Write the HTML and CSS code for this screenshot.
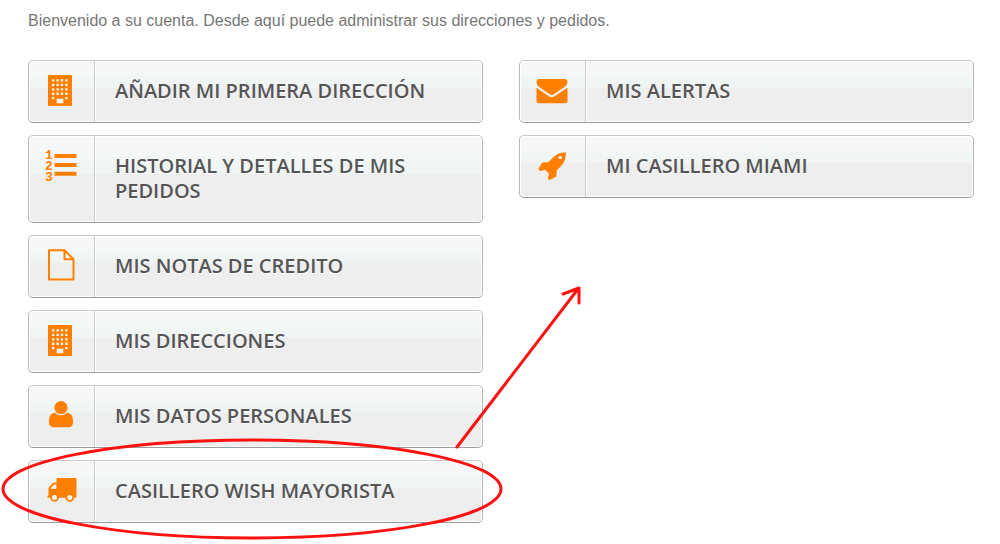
FILE: index.html
```html
<!DOCTYPE html>
<html lang="es">

<head>
    <meta charset="utf-8">
    <meta name="viewport" content="width=device-width, initial-scale=1.0">
    <title>Mi cuenta</title>
    <link rel="stylesheet" href="styles.css">
</head>

<body>
    <svg class="sprite" aria-hidden="true">
        <symbol id="building" viewBox="0 0 32 32">
            <rect x="3" y="1" width="24" height="31" rx="1" />
            <path class="hueco" d="M7 5.300h2.300v2.300h-2.300zM11.500 5.300h2.300v2.300h-2.300zM15.800 5.300h2.300v2.300h-2.300zM20.200 5.300h2.300v2.300h-2.300zM7 9.700h2.300v2.300h-2.300zM11.500 9.700h2.300v2.300h-2.300zM15.800 9.700h2.300v2.300h-2.300zM20.200 9.700h2.300v2.300h-2.300zM7 14.200h2.300v2.300h-2.300zM11.500 14.200h2.300v2.300h-2.300zM15.800 14.200h2.300v2.300h-2.300zM20.200 14.200h2.300v2.300h-2.300zM7 18.600h2.300v2.300h-2.300zM11.500 18.600h2.300v2.300h-2.300zM15.800 18.600h2.300v2.300h-2.300zM20.200 18.600h2.300v2.300h-2.300zM7 23h2.300v2.300h-2.300zM20.200 23h2.300v2.300h-2.300zM11.700 24.700h6.600v4.500h-6.600z" />
        </symbol>
    </svg>

    <main class="cuenta">
        <p class="intro">Bienvenido a su cuenta. Desde aquí puede administrar sus direcciones y pedidos.</p>

        <div class="columnas">
            <ul class="lista">
                <li>
                    <a class="enlace" href="#">
                        <span class="icono"><svg viewBox="0 0 32 32"><use href="#building" /></svg></span>
                        <span class="texto">Añadir mi primera dirección</span>
                    </a>
                </li>
                <li>
                    <a class="enlace" href="#">
                        <span class="icono">
                            <svg viewBox="0 0 32 32">
                                <text class="cifra" x="0" y="10">1</text>
                                <text class="cifra" x="0" y="21">2</text>
                                <text class="cifra" x="0" y="32">3</text>
                                <path d="M9.500 5h22v4h-22zM9.500 14h22v4h-22zM9.500 22.700h22v4h-22z" />
                            </svg>
                        </span>
                        <span class="texto">Historial y detalles de mis pedidos</span>
                    </a>
                </li>
                <li>
                    <a class="enlace" href="#">
                        <span class="icono">
                            <svg viewBox="0 0 32 32">
                                <path class="linea" d="M4 1.200h15.500l9 9v20.300h-24.500zM19.500 1.200v9h9" />
                            </svg>
                        </span>
                        <span class="texto">Mis notas de credito</span>
                    </a>
                </li>
                <li>
                    <a class="enlace" href="#">
                        <span class="icono"><svg viewBox="0 0 32 32"><use href="#building" /></svg></span>
                        <span class="texto">Mis direcciones</span>
                    </a>
                </li>
                <li>
                    <a class="enlace" href="#">
                        <span class="icono">
                            <svg viewBox="0 0 32 32">
                                <circle cx="16" cy="8.700" r="6.600" />
                                <path d="M9.800 13.800c3.800 3.400 8.600 3.400 12.400 0 4.400.2 5.900 4.600 5.900 9.400 0 3.100-2 5.100-4.800 5.100H8.700c-2.800 0-4.800-2-4.800-5.100 0-4.800 1.500-9.200 5.900-9.400z" />
                            </svg>
                        </span>
                        <span class="texto">Mis datos personales</span>
                    </a>
                </li>
                <li>
                    <a class="enlace" href="#">
                        <span class="icono">
                            <svg viewBox="0 0 32 32">
                                <path d="M12.500 4h18q1 0 1 1v17.500q0 1.200-1.500 1.200H3.500q-1.200 0-1.200-1 0-.9 1.200-1v-7.200q0-1 .7-1.700l3.600-3.600q.7-.7 1.700-.7h2V5q0-1 1-1z" />
                                <path class="hueco" d="M5.600 14.700v-.6l3.800-3.600h1.900v4.200z" />
                                <circle cx="9.500" cy="23.500" r="4.300" />
                                <circle cx="24.800" cy="23.500" r="4.300" />
                                <circle class="hueco" cx="9.500" cy="23.500" r="2.500" />
                                <circle class="hueco" cx="24.800" cy="23.500" r="2.500" />
                            </svg>
                        </span>
                        <span class="texto">Casillero Wish Mayorista</span>
                    </a>
                </li>
            </ul>

            <ul class="lista">
                <li>
                    <a class="enlace" href="#">
                        <span class="icono">
                            <svg viewBox="0 0 32 32">
                                <path d="M3 5h25.500q3 0 3 3 0 2.700-2.800 4.700l-9.500 6.500q-2.500 1.800-3.500 1.800t-3.500-1.800l-9.300-6.500Q.5 11 .5 8q0-3 2.500-3z" />
                                <path d="M.5 13.500q.8.900 1.800 1.600l8.700 6q3 2.200 4.700 2.200t4.700-2.200l9.300-6.200q1-.7 1.800-1.500v13.100q0 2.800-2.800 2.800H3.300q-2.800 0-2.800-2.800z" />
                            </svg>
                        </span>
                        <span class="texto">Mis alertas</span>
                    </a>
                </li>
                <li>
                    <a class="enlace" href="#">
                        <span class="icono">
                            <svg viewBox="0 0 32 32">
                                <path d="M29.800 3.200c.3 6.300-1.500 10.800-5.800 14.900l-3.300 3.300-.3 5.500q0 .5-.5.800l-6 3.300q-.6.200-1-.3l-.9-1q-.3-.3-.1-.7l1.200-4.200-4.100-4.100-4.400 1.200q-.4.100-.7-.2l-1.300-1.300q-.3-.4-.1-.8l3.400-5.600q.3-.5.8-.5l5.600-.3 3.200-3.200c4.100-4.400 8.200-6.700 14.300-6.800z" />
                                <circle class="hueco" cx="24.200" cy="8.400" r="1.700" />
                            </svg>
                        </span>
                        <span class="texto">Mi casillero Miami</span>
                    </a>
                </li>
            </ul>
        </div>

        <!-- marca en rojo sobre el casillero mayorista -->
        <svg class="marca" width="600" height="544" viewBox="0 0 600 544" aria-hidden="true">
            <ellipse cx="252" cy="489" rx="249" ry="49" />
            <path d="M457 447L578 289M563 294l16-6v15" />
        </svg>
    </main>
</body>

</html>
```
FILE: styles.css
```css
* {
    box-sizing: border-box;
}

body {
    margin: 0;
    background: #fff;
    font-family: "Liberation Sans", Arial, sans-serif;
    color: #777;
}

.sprite {
    display: none;
}

.cuenta {
    position: relative;
    padding: 11px 26px 22px 28px;
}

.intro {
    margin: 0 0 29px;
    font-size: 16px;
    line-height: 20px;
}

.columnas {
    display: grid;
    grid-template-columns: 1fr 1fr;
    gap: 36px;
    align-items: start;
}

.lista {
    display: grid;
    gap: 12px;
    margin: 0;
    padding: 0;
    list-style: none;
}

.enlace {
    display: flex;
    border: 1px solid;
    border-color: #cacaca #b7b7b7 #9a9a9a #b7b7b7;
    border-radius: 5px;
    background: linear-gradient(#f7f7f7 0%, #f6f7f7 20%, #f0f6f4 32%, #f0f5f3 44%, #eee 44%, #eee 100%);
    box-shadow: inset 0 0 0 1px #fff;
    color: #555;
    font-family: "Open Sans", sans-serif;
    font-size: 20px;
    font-weight: 600;
    line-height: 25px;
    text-transform: uppercase;
    text-decoration: none;
    text-shadow: 0 1px #fff;
}

.icono {
    flex: none;
    width: 66px;
    padding: 13px 16px;
    border-right: 1px solid #ccc;
}

.icono svg {
    display: block;
    width: 32px;
    height: 32px;
    overflow: visible;
    fill: #ff8000;
}

.icono .hueco,
.hueco {
    fill: #f4f5f5;
}

.icono .linea {
    fill: none;
    stroke: #ff8000;
    stroke-width: 2;
    stroke-linejoin: round;
}

.cifra {
    font-family: "Liberation Mono", monospace;
    font-size: 13px;
    font-weight: 700;
    text-shadow: none;
}

.texto {
    flex: 1;
    padding: 17px 20px 19px 19px;
    border-left: 1px solid #fff;
}

.marca {
    position: absolute;
    top: 0;
    left: 0;
    fill: none;
    stroke: #f11;
    stroke-width: 3;
    stroke-linecap: round;
    stroke-linejoin: round;
    pointer-events: none;
}
```
